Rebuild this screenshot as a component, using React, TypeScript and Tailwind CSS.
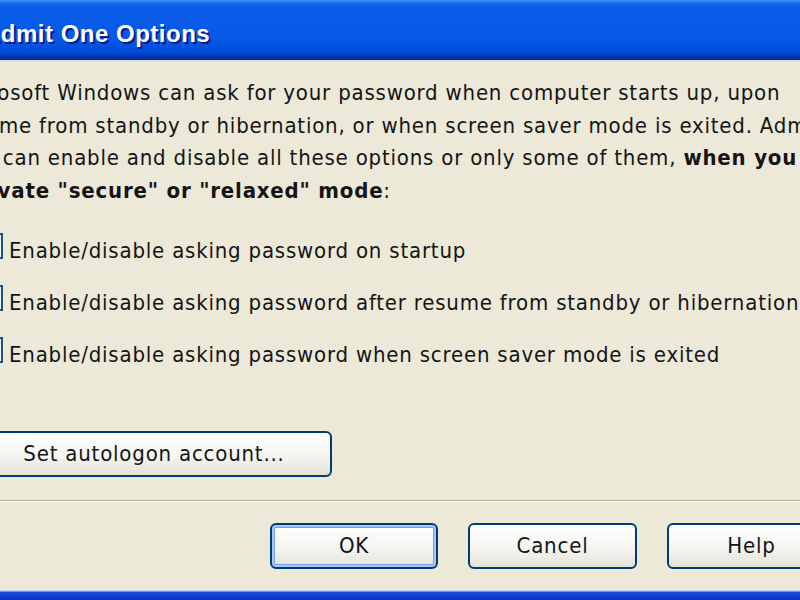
import React from "react";

const body = "font-['DejaVu_Sans_Condensed','DejaVu_Sans',sans-serif] text-[22px] tracking-[0.8px] text-[#151515]";

function Checkbox() {
  return (
    <div className="w-[26px] h-[26px] shrink-0 border-2 border-[#1c5180] bg-[linear-gradient(135deg,#dcdcd7,#ffffff)]" />
  );
}

function CheckRow({ label }: { label: string }) {
  return (
    <div className="flex items-start h-[52px] ml-[24px] gap-[6px]">
      <Checkbox />
      <span className="mt-[2px] leading-[32px] whitespace-nowrap">{label}</span>
    </div>
  );
}

function XPButton({ label, width, isDefault }: { label: string; width: string; isDefault?: boolean }) {
  return (
    <button
      className={`${width} h-[46px] shrink-0 rounded-[6px] border-2 border-[#003c74] bg-[linear-gradient(to_bottom,#ffffff,#f3f3ef_60%,#e4e1d6)] flex items-center justify-center leading-none ${
        isDefault ? "shadow-[inset_0_0_0_2px_#a9c4f6,inset_0_0_0_3px_#7a9ee8]" : ""
      }`}
    >
      {label}
    </button>
  );
}

export default function App() {
  return (
    <div className={`w-[800px] h-[600px] overflow-hidden bg-[#ece9d8] flex flex-col ${body}`}>
      {/* title bar */}
      <div className="h-[60px] shrink-0 bg-[linear-gradient(to_bottom,#3f8ff6_0px,#2a7af2_2px,#1366ec_4px,#0a5ce8_8px,#0659e7_40px,#004ad8_52px,#0039bd_56px,#002e9e_58px,#002e9e_60px)] flex items-center">
        <span className="ml-[-17px] mt-[7px] font-['Liberation_Sans',sans-serif] font-bold text-[24px] tracking-[0.5px] text-white [text-shadow:2px_2px_0_#0a1c8a] whitespace-nowrap">
          Admit One Options
        </span>
      </div>
      <div className="h-[2px] shrink-0 bg-[#d4dcee]" />

      {/* content */}
      <div className="ml-[-47px] mt-[15px] flex flex-col">
        <p className="leading-[32.5px] whitespace-nowrap">
          Microsoft Windows can ask for your password when computer starts up, upon
          <br />
          resume from standby or hibernation, or when screen saver mode is exited. Administrators
          <br />
          One can enable and disable all these options or only some of them, <b>when you</b>
          <br />
          <b>activate "secure" or "relaxed" mode</b>:
        </p>

        <div className="mt-[26px] flex flex-col">
          <CheckRow label="Enable/disable asking password on startup" />
          <CheckRow label="Enable/disable asking password after resume from standby or hibernation" />
          <CheckRow label="Enable/disable asking password when screen saver mode is exited" />
        </div>

        <div className="mt-[42px] ml-[23px]">
          <XPButton label="Set autologon account..." width="w-[356px]" />
        </div>
      </div>

      <div className="mt-[23px] h-[2px] shrink-0 border-t border-[#aca899] border-b border-b-white" />

      <div className="mt-[21px] ml-[270px] flex gap-[30px]">
        <XPButton label="OK" width="w-[168px]" isDefault />
        <XPButton label="Cancel" width="w-[169px]" />
        <XPButton label="Help" width="w-[169px]" />
      </div>

      <div className="mt-auto h-[10px] shrink-0 bg-[linear-gradient(to_bottom,#c9d6f3_0px,#c9d6f3_1px,#1f4fd8_2px,#0a2fc4_10px)]" />
    </div>
  );
}
